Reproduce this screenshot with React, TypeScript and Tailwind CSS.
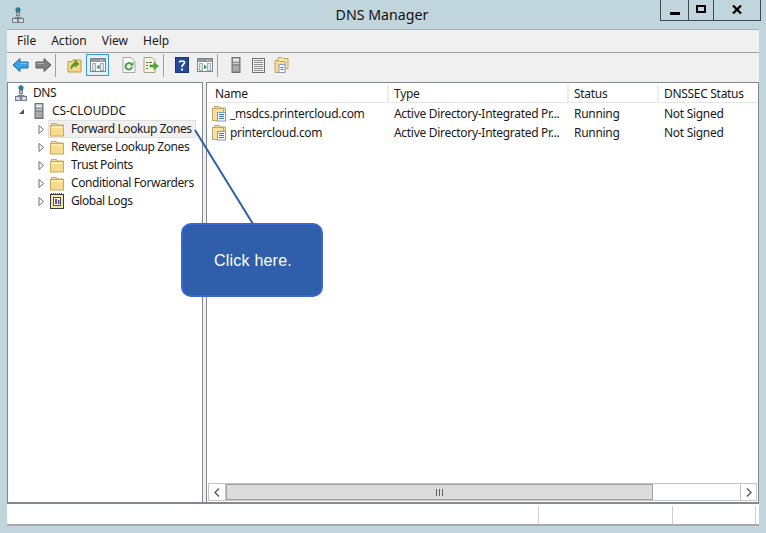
import React from 'react';

const DnsIcon = () => (
  <svg width="12" height="16" viewBox="0 0 12 16" className="shrink-0">
    <circle cx="6" cy="2.800" r="2.600" fill="#2f8f4e" />
    <path d="M4 2 6 .6l2 1-1 2-2 1z" fill="#2c6fc0" />
    <rect x="4.500" y="5.500" width="3" height="3" fill="#c4c8cc" stroke="#77808a" />
    <path d="M6 8.500v2M2.500 10.500h7" stroke="#77808a" fill="none" />
    <rect x="0.500" y="11.500" width="5" height="4" fill="#d5d8da" stroke="#77808a" />
    <rect x="6.500" y="11.500" width="5" height="4" fill="#d5d8da" stroke="#77808a" />
  </svg>
);

const ServerIcon = ({ className = '' }: { className?: string }) => (
  <svg width="10" height="16" viewBox="0 0 10 16" className={`shrink-0 ${className}`}>
    <rect x="1" y="0.500" width="8" height="15" fill="#8d9296" stroke="#6c7276" />
    <rect x="2" y="1.500" width="6" height="3" fill="#e6e8ea" />
    <rect x="2" y="6" width="6" height="1" fill="#d0d3d5" />
    <rect x="2" y="9" width="6" height="5" fill="#a7abae" />
    <rect x="6" y="12" width="1.500" height="1.500" fill="#8bc34a" />
  </svg>
);

const FolderIcon = () => (
  <svg width="16" height="15" viewBox="0 0 16 15" className="shrink-0">
    <path d="M1.500 1.500h5l1 1.500h6v3H1.500z" fill="#f3dfa0" stroke="#c9a95c" />
    <rect x="0.500" y="3.500" width="13" height="10.500" fill="#f5dc8e" stroke="#c9a95c" />
    <rect x="1.500" y="4.500" width="11" height="1.500" fill="#fbefc4" />
  </svg>
);

const ZoneIcon = () => (
  <svg width="16" height="16" viewBox="0 1 16 16" className="shrink-0">
    <path d="M3.500 1.500h5l1 1.500h5v11h-11z" fill="#f5e3a6" stroke="#bfa468" />
    <rect x="1.500" y="3.500" width="11" height="12" fill="#f7dfa0" stroke="#bfa468" />
    <rect x="6.500" y="7.500" width="8" height="8.500" fill="#ffffff" stroke="#7d9cc0" />
    <path d="M8 9.500h5M8 11.500h5M8 13.500h5" stroke="#3d78b8" />
  </svg>
);

const LogIcon = () => (
  <svg width="16" height="16" viewBox="0 0 16 16" className="shrink-0">
    <rect x="0.500" y="1.500" width="13" height="14" fill="#f2e6a8" stroke="#3a3a3a" />
    <path d="M1 .5h12" stroke="#555" strokeDasharray="1 1" />
    <rect x="3.500" y="4.500" width="7" height="8" fill="#ffffff" stroke="#555" />
    <path d="M5 6h2v5H5z" fill="#c0392b" />
    <path d="M8 7h1.500v4H8z" fill="#3355bb" />
  </svg>
);

const Arrow = ({ right = false, fill, stroke }: { right?: boolean; fill: string; stroke: string }) => (
  <svg width="17" height="16" viewBox="0 0 17 16" className={right ? 'shrink-0 -scale-x-100' : 'shrink-0'}>
    <path d="M1 8 8 1.500V5h8v6H8v3.500z" fill={fill} stroke={stroke} strokeLinejoin="round" />
    <path d="M8 6.500h7" stroke="#ffffff" strokeOpacity="0.4" />
  </svg>
);

const UpFolderIcon = () => (
  <svg width="15" height="16" viewBox="0 0 15 16" className="shrink-0">
    <path d="M1 4.500h4l1-1.500h8v12H1z" fill="#f3d88a" stroke="#b99a50" />
    <path d="M4 12c0-4 2-6 4-6V3l4 4-4 3V8c-1 0-2 2-4 4z" fill="#5f9e2e" stroke="#3f7a1a" strokeWidth="0.600" />
  </svg>
);

const PanelIcon = ({ flip = false }: { flip?: boolean }) => (
  <svg width="16" height="14" viewBox="0 0 16 14" className="shrink-0">
    <rect x="0.500" y="0.500" width="15" height="13" fill="#ffffff" stroke="#7b8590" />
    <rect x="1" y="1" width="14" height="3" fill="#8f99a4" />
    <path d="M12 2.500h1M10 2.500h1" stroke="#fff" />
    <rect x="2.500" y="5.500" width="3" height="7" fill="#e4e9ee" stroke="#a5b0bb" />
    <rect x="10.500" y="5.500" width="3" height="7" fill="#e4e9ee" stroke="#a5b0bb" />
    <path d={flip ? 'M7 6.500v5l3-2.500z' : 'M9.500 6.500v5l-3-2.500z'} fill="#2f9a4a" />
  </svg>
);

const RefreshIcon = () => (
  <svg width="14" height="16" viewBox="0 0 14 16" className="shrink-0">
    <path d="M1 .5h8l4 4v11H1z" fill="#fafafa" stroke="#a6a6a6" />
    <path d="M10 9.500a3.200 3.200 0 1 1-1-2.500" fill="none" stroke="#3fa33f" strokeWidth="2" />
    <path d="M7.500 8.500h4v-4z" fill="#3fa33f" />
  </svg>
);

const ExportIcon = () => (
  <svg width="16" height="16" viewBox="0 0 16 16" className="shrink-0">
    <path d="M1 .5h8l3 3v12H1z" fill="#f7f3dc" stroke="#a6a28c" />
    <path d="M3 5.500h2M3 8.500h2M3 11.500h2M6 5.500h3" stroke="#666" />
    <path d="M7 8h4V5.500L15.500 9 11 12.500V10H7z" fill="#58a83c" stroke="#3f8a2a" strokeWidth="0.600" />
  </svg>
);

const HelpIcon = () => (
  <svg width="14" height="16" viewBox="0 0 14 16" className="shrink-0">
    <rect x="0.500" y="0.500" width="13" height="15" fill="#27489a" stroke="#1c3476" />
    <path d="M4.500 5.500C4.500 3.500 9.500 3.500 9.500 5.500c0 2-2.500 2-2.500 4.500" fill="none" stroke="#fff" strokeWidth="1.700" />
    <rect x="6" y="11.500" width="2" height="2" fill="#fff" />
  </svg>
);

const ListIcon = () => (
  <svg width="15" height="15" viewBox="0 0 15 15" className="shrink-0">
    <rect x="1.500" y="0.500" width="12" height="14" fill="#f4f4f4" stroke="#6e6e6e" />
    <path d="M3 2.500h9M3 4.500h9M3 6.500h9M3 8.500h9M3 10.500h9M3 12.500h9" stroke="#8c8c8c" />
  </svg>
);

const FoldersIcon = () => (
  <svg width="15" height="16" viewBox="0 0 15 16" className="shrink-0">
    <path d="M4 .5h4l1 1h5v10H4z" fill="#f7e4a8" stroke="#c0a666" />
    <path d="M1 3.500h4l1 1h5v11H1z" fill="#f6dc92" stroke="#c0a666" />
    <rect x="5" y="7.500" width="6" height="8" fill="#fff" stroke="#7d9cc0" />
    <path d="M6.500 10.500h3M6.500 12.500h3" stroke="#3d78b8" />
  </svg>
);

const Expander = () => (
  <svg width="7" height="9" viewBox="0 0 7 9" className="shrink-0">
    <path d="M1 .5 5.500 4.500 1 8.500z" fill="#ffffff" stroke="#6e6e6e" />
  </svg>
);

const Sep = ({ className }: { className: string }) => <div className={`w-px h-[23px] bg-[#a0a0a0] ${className}`} />;

const treeItems = [
  { label: 'Reverse Lookup Zones', icon: <FolderIcon /> },
  { label: 'Trust Points', icon: <FolderIcon /> },
  { label: 'Conditional Forwarders', icon: <FolderIcon /> },
  { label: 'Global Logs', icon: <LogIcon /> },
];

const zones = ['_msdcs.printercloud.com', 'printercloud.com'];

const App: React.FC = () => {
  return (
    <div className="relative w-[766px] h-[533px] overflow-hidden bg-[#c1d5dc] flex flex-col text-[12px] tracking-[-0.3px] text-[#1a1a1a] font-['Noto_Sans','Open_Sans',sans-serif]">
      {/* Title bar */}
      <div className="h-[29px] shrink-0 flex items-start">
        <div className="ml-[12px] mt-[7px]"><DnsIcon /></div>
        <div className="flex-1 text-center pt-[5px] pl-[80px] text-[14.200px] leading-[20px] text-[#111] tracking-normal">DNS Manager</div>
        <div className="mr-[5px] flex h-[21px] border border-t-0 border-[#3d4a52]">
          <div className="w-[28px] flex items-center justify-center border-r border-[#3d4a52]">
            <div className="w-[10px] h-[3px] bg-black mt-[6px]" />
          </div>
          <div className="w-[25px] flex items-center justify-center border-r border-[#3d4a52]">
            <div className="w-[10px] h-[8px] border-2 border-black -mt-[2px]" />
          </div>
          <div className="w-[46px] flex items-center justify-center">
            <svg width="10" height="9" viewBox="0 0 10 9" className="-mt-[2px]">
              <path d="M1 .5 9 8.500M9 .5 1 8.500" stroke="#000" strokeWidth="2.200" />
            </svg>
          </div>
        </div>
      </div>

      {/* Window body */}
      <div className="mx-[7px] flex-1 flex flex-col bg-[#f0f0f0] border-t border-[#a5b0b5] mb-[7px]">
        {/* Menu */}
        <div className="h-[23px] shrink-0 flex items-center gap-[15px] pl-[10px] border-b border-[#a0a0a0] tracking-normal">
          <span>File</span>
          <span>Action</span>
          <span>View</span>
          <span>Help</span>
        </div>

        {/* Toolbar */}
        <div className="h-[29px] shrink-0 flex items-center pb-[5px]">
          <div className="ml-[5px]"><Arrow fill="#3aa0e8" stroke="#1f6fb0" /></div>
          <div className="ml-[6px]"><Arrow right fill="#808080" stroke="#5c5c5c" /></div>
          <Sep className="ml-[3px]" />
          <div className="ml-[11px]"><UpFolderIcon /></div>
          <div className="ml-[4px] w-[23px] h-[22px] flex items-center justify-center border border-[#3399dd] bg-[#e3f0fa]">
            <PanelIcon />
          </div>
          <div className="ml-[13px]"><RefreshIcon /></div>
          <div className="ml-[7px]"><ExportIcon /></div>
          <Sep className="ml-[4px]" />
          <div className="ml-[11px]"><HelpIcon /></div>
          <div className="ml-[8px]"><PanelIcon flip /></div>
          <Sep className="ml-[4px]" />
          <div className="ml-[13px]"><ServerIcon /></div>
          <div className="ml-[10px]"><ListIcon /></div>
          <div className="ml-[8px]"><FoldersIcon /></div>
        </div>

        {/* Panes */}
        <div className="flex-1 min-h-0 flex border-b-2 border-[#828790]">
          {/* Tree */}
          <div className="w-[196px] shrink-0 bg-white border border-b-0 border-[#828790] pt-[1px] whitespace-nowrap tracking-[-0.42px]">
            <div className="h-[18px] flex items-center pl-[7px] gap-[6px]">
              <DnsIcon />
              <span>DNS</span>
            </div>
            <div className="h-[18px] flex items-center pl-[10px]">
              <svg width="7" height="7" viewBox="0 0 7 7" className="shrink-0"><path d="M6 1v5H1z" fill="#555" /></svg>
              <ServerIcon className="ml-[9px]" />
              <span className="ml-[8px] tracking-[-0.1px]">CS-CLOUDDC</span>
            </div>
            <div className="h-[18px] flex items-center pl-[30px]">
              <Expander />
              <div className="ml-[3px] w-[148px] h-[18px] pl-[1px] flex items-center gap-[5px] bg-[#f0f0f0] border border-[#e0e0e0]">
                <FolderIcon />
                <span>Forward Lookup Zones</span>
              </div>
            </div>
            {treeItems.map((item) => (
              <div key={item.label} className="h-[18px] flex items-center pl-[30px]">
                <Expander />
                <div className="ml-[5px] flex items-center gap-[5px]">
                  {item.icon}
                  <span>{item.label}</span>
                </div>
              </div>
            ))}
          </div>

          <div className="w-[3px] shrink-0" />

          {/* List */}
          <div className="flex-1 min-w-0 bg-white border border-b-0 border-[#828790] flex flex-col">
            <div className="h-[19px] mt-[1px] ml-[1px] pt-[2px] shrink-0 flex items-center border-b border-[#e5e5e5]">
              <div className="w-[181px] pl-[7px] border-r-2 border-[#ececec] leading-[18px]">Name</div>
              <div className="w-[180px] pl-[5px] border-r-2 border-[#ececec] leading-[18px]">Type</div>
              <div className="w-[90px] pl-[5px] border-r-2 border-[#ececec] leading-[18px]">Status</div>
              <div className="flex-1 pl-[5px] leading-[18px]">DNSSEC Status</div>
            </div>
            <div className="flex-1 min-h-0 ml-[1px] pt-[1px]">
              {zones.map((zone) => (
                <div key={zone} className="h-[19px] flex items-center">
                  <div className="w-[181px] pl-[3px] flex items-center gap-[3px]">
                    <ZoneIcon />
                    <span className="whitespace-nowrap">{zone}</span>
                  </div>
                  <div className="w-[180px] pl-[5px] whitespace-nowrap">Active Directory-Integrated Pr...</div>
                  <div className="w-[90px] pl-[5px]">Running</div>
                  <div className="flex-1 pl-[5px]">Not Signed</div>
                </div>
              ))}
            </div>
            {/* Horizontal scrollbar */}
            <div className="h-[18px] mx-[1px] mb-[1px] shrink-0 flex border border-[#c4c4c4] bg-white">
              <div className="w-[17px] flex items-center justify-center border-r border-[#c4c4c4]">
                <svg width="6" height="9" viewBox="0 0 6 9"><path d="M5 .5 1 4.500l4 4" fill="none" stroke="#606060" strokeWidth="1.500" /></svg>
              </div>
              <div className="w-[427px] bg-[#dcdcdc] border border-[#a0a0a0] flex items-center justify-center">
                <svg width="8" height="7" viewBox="0 0 8 7"><path d="M.5 0v7M3.500 0v7M6.500 0v7" stroke="#606060" /></svg>
              </div>
              <div className="flex-1" />
              <div className="w-[16px] flex items-center justify-center border-l border-[#c4c4c4]">
                <svg width="6" height="9" viewBox="0 0 6 9"><path d="M1 .5 5 4.500l-4 4" fill="none" stroke="#606060" strokeWidth="1.500" /></svg>
              </div>
            </div>
          </div>
        </div>

        {/* Status bar */}
        <div className="h-[22px] shrink-0 flex bg-white border-b-2 border-[#a8a8a8] pt-[2px]">
          <div className="w-[531px]" />
          <div className="w-[134px] border-l border-[#d0d0d0]" />
          <div className="w-[84px] border-x border-[#d0d0d0]" />
        </div>
      </div>

      {/* Callout pointing at the tree node */}
      <svg width="766" height="533" className="absolute left-0 top-0 pointer-events-none">
        <path d="M195 130 253 224" stroke="#2f5fa8" strokeWidth="2" fill="none" />
      </svg>
      <div className="absolute left-[181px] top-[223px] w-[142px] h-[74px] pt-[1px] pl-[2px] rounded-[10px] bg-[#2f5faa] border-2 border-[#3a66d0] flex items-center justify-center text-white text-[16px] tracking-[0.2px] font-['Liberation_Sans',sans-serif]">
        Click here.
      </div>
    </div>
  );
};

export default App;
